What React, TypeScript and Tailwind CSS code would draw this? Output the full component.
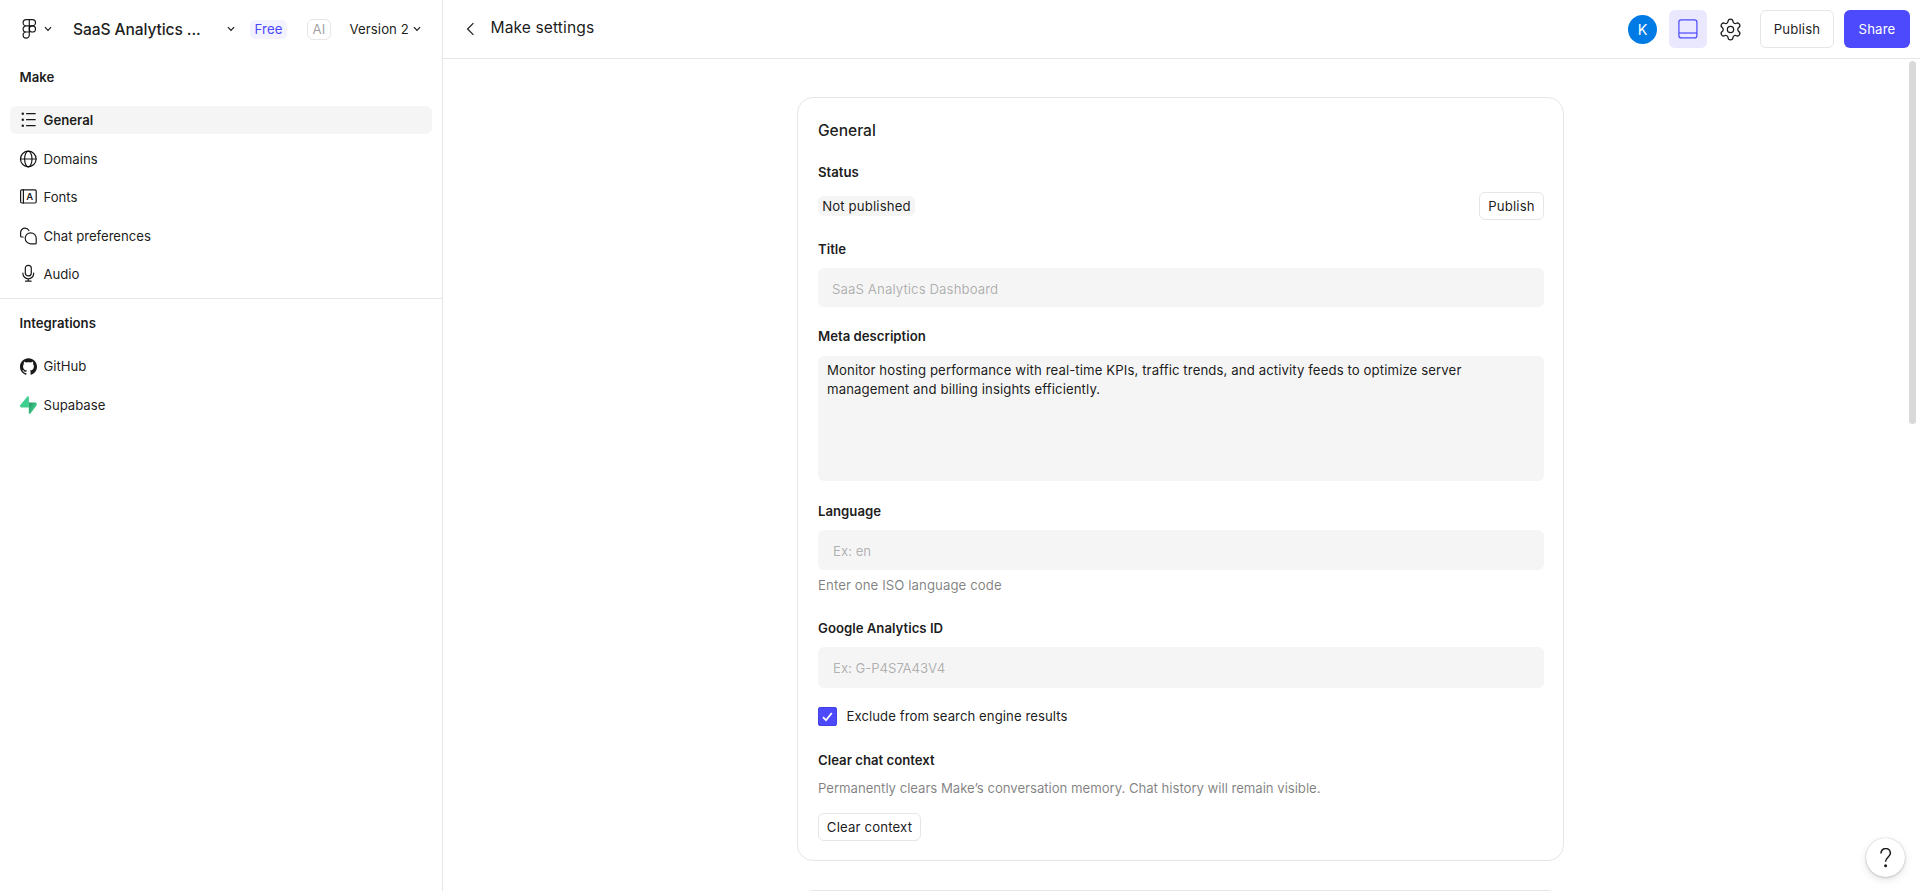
import type { ReactNode } from 'react';
import { Settings } from 'lucide-react';
import { SiGithub } from 'react-icons/si';

interface NavItem {
  icon: ReactNode;
  label: string;
  active?: boolean;
}

function Chevron({ className = '' }: { className?: string }) {
  return (
    <svg className={className} width="8" height="6" viewBox="0 0 8 6" fill="none" stroke="currentColor" strokeWidth="1.2">
      <path d="M0.9 1.2 4 4.3 7.1 1.2" />
    </svg>
  );
}

function FigmaLogo() {
  return (
    <svg width="15" height="21" viewBox="0 0.5 15 21" fill="none" stroke="currentColor" strokeWidth="1.2">
      <path d="M7.3 1.1H4.2a3.1 3.1 0 0 0 0 6.2h3.1zM7.3 1.1h3.1a3.1 3.1 0 0 1 0 6.2H7.3zM7.3 7.3H4.2a3.1 3.1 0 0 0 0 6.2h3.1zM7.3 13.5H4.2a3.1 3.1 0 1 0 3.1 3.1z" />
      <circle cx="10.4" cy="10.4" r="3.1" />
    </svg>
  );
}

function Icon({ children }: { children: ReactNode }) {
  return (
    <svg width="20" height="20" viewBox="0 0 20 20" fill="none" stroke="currentColor" strokeWidth="1.2" strokeLinecap="round" strokeLinejoin="round">
      {children}
    </svg>
  );
}

const makeItems: NavItem[] = [
  {
    label: 'General',
    active: true,
    icon: (
      <Icon>
        <path d="M8.6 3.7h8.6M8.6 9.7h8.6M8.6 15.7h8.6" />
        <g fill="currentColor" stroke="none">
          <circle cx="4.8" cy="3.7" r="1.2" />
          <circle cx="4.8" cy="9.7" r="1.2" />
          <circle cx="4.8" cy="15.7" r="1.2" />
        </g>
      </Icon>
    ),
  },
  {
    label: 'Domains',
    icon: (
      <Icon>
        <circle cx="10.3" cy="10" r="7.8" />
        <ellipse cx="10.3" cy="10" rx="3.7" ry="7.8" />
        <path d="M2.5 10h15.6" />
      </Icon>
    ),
  },
  {
    label: 'Fonts',
    icon: (
      <Icon>
        <rect x="2.6" y="2.8" width="15.6" height="13.2" rx="1.2" />
        <path d="M5.4 2.8V16" />
        <text x="11.8" y="12.6" textAnchor="middle" fontSize="9.5" fontWeight="600" fill="currentColor" stroke="none">
          A
        </text>
      </Icon>
    ),
  },
  {
    label: 'Chat preferences',
    icon: (
      <Icon>
        <path d="M5.2 11H3.5a.9.9 0 0 1-.9-.9V6.6a4.4 4.4 0 0 1 4.4-4.4c1.7 0 3.2 1 3.9 2.4" />
        <path d="M12.7 6.8a5.5 5.5 0 0 1 5.5 5.5v4.6a.9.9 0 0 1-.9.9h-4.6a5.5 5.5 0 0 1 0-11z" />
      </Icon>
    ),
  },
  {
    label: 'Audio',
    icon: (
      <Icon>
        <rect x="7.3" y="1.3" width="6" height="10.6" rx="3" />
        <path d="M4.9 9v.4a5.4 5.4 0 0 0 10.8 0V9M10.3 14.8v2.4M7.5 17.2h5.6" />
      </Icon>
    ),
  },
];

const integrationItems: NavItem[] = [
  { label: 'GitHub', icon: <SiGithub className="ml-0.5 size-[17px]" /> },
  {
    label: 'Supabase',
    icon: (
      <svg width="20" height="20" viewBox="0 0 20 20">
        <defs>
          <linearGradient id="supabase-shade" x1="0" y1="0" x2="0.8" y2="0.6">
            <stop offset="0" stopColor="#249361" />
            <stop offset="1" stopColor="#3ecf8e" />
          </linearGradient>
        </defs>
        <path d="M10.8 7.6v10.3c0 .9 1.1 1.2 1.6.6l6.1-8c.7-.9.1-2.9-1-2.9z" fill="url(#supabase-shade)" />
        <path d="M10.9 2c0-.8-1-1.2-1.5-.5L2.3 10.1c-.7.8-.1 2.5.9 2.5h7.7z" fill="#3ecf8e" />
      </svg>
    ),
  },
];

function NavList({ items }: { items: NavItem[] }) {
  return (
    <nav className="flex flex-col gap-[10.5px] px-2.5 tracking-[-0.04px]">
      {items.map((item) => (
        <div
          key={item.label}
          className={
            item.active
              ? 'flex h-7 items-center rounded-md bg-[#f5f5f5] pl-2 font-semibold tracking-normal'
              : 'flex h-7 items-center rounded-md pl-2'
          }
        >
          <span className="flex w-[25.5px] shrink-0">{item.icon}</span>
          <span className="pt-px text-black/90">{item.label}</span>
        </div>
      ))}
    </nav>
  );
}

function Sidebar() {
  return (
    <aside className="w-[443px] shrink-0 border-r border-[#e6e6e6]">
      <div className="flex h-[58px] items-center">
        <span className="ml-[21.5px] flex">
          <FigmaLogo />
        </span>
        <Chevron className="ml-[7.5px]" />
        <span className="ml-[21px] w-[154px] text-[15.6px] font-medium tracking-[-0.1px]">SaaS Analytics ...</span>
        <Chevron />
        <span className="ml-[15px] flex h-[19px] w-[37px] items-center justify-center rounded-[5px] bg-[#f3f2ff] pt-px text-[#4d49fc]">
          Free
        </span>
        <span className="ml-5 flex h-[21px] w-6 items-center justify-center rounded-md border border-[#e6e6e6] text-black/40">
          AI
        </span>
        <span className="ml-[18.5px] w-[58.5px] pt-px whitespace-nowrap">Version 2</span>
        <Chevron className="ml-[5px]" />
      </div>
      <h2 className="mt-2.5 mb-[19px] ml-[19.5px] font-semibold tracking-normal">Make</h2>
      <NavList items={makeItems} />
      <h2 className="mt-[10px] mb-[19px] border-t border-[#e6e6e6] pt-[15px] pl-[19.5px] font-semibold tracking-normal">
        Integrations
      </h2>
      <NavList items={integrationItems} />
    </aside>
  );
}

function TopBar() {
  return (
    <header className="flex h-[59px] shrink-0 items-center border-b border-[#e6e6e6] pr-2.5 pl-6">
      <svg className="-ml-px" width="8" height="14" viewBox="0 0 8 14" fill="none" stroke="currentColor" strokeWidth="1.2">
        <path d="M7.4 1.2 1.6 7l5.8 5.8" />
      </svg>
      <h1 className="ml-[16.5px] pb-[3px] text-[15.6px] font-normal tracking-[0.1px]">Make settings</h1>
      <div className="ml-auto flex items-center">
        <div className="flex size-[29px] items-center justify-center rounded-full bg-[#007be5] text-[14.4px] text-white">K</div>
        <button className="ml-3 flex size-[38px] items-center justify-center rounded-md bg-[#e9e8ff] text-[#4d49fc]">
          <svg width="20" height="20" viewBox="0 0 20 20" fill="none" stroke="currentColor" strokeWidth="1.2">
            <rect x="0.9" y="0.9" width="18" height="18" rx="2.2" />
            <path d="M1 14h18" />
          </svg>
        </button>
        <Settings className="ml-[11px] size-[25px]" strokeWidth={1.2} />
        <button className="ml-[17px] h-[38px] w-[74px] rounded-md border border-[#e6e6e6] pt-px tracking-[0.15px]">
          Publish
        </button>
        <button className="ml-2.5 h-[38px] w-[66px] rounded-md bg-[#4d49fc] pt-px tracking-[0.15px] text-white">Share</button>
      </div>
    </header>
  );
}

function GeneralCard() {
  return (
    <section className="flex w-[767px] flex-col items-start rounded-2xl border border-[#e6e6e6] pt-[21px] pr-[19px] pb-[19px] pl-5">
      <h2 className="text-[15.6px] leading-6 font-medium tracking-[-0.04px]">General</h2>

      <h3 className="mt-5 font-semibold tracking-normal">Status</h3>
      <div className="mt-2.5 flex h-7 w-full items-center justify-between tracking-[0.15px]">
        <span className="flex h-5 w-[97px] items-center justify-center rounded-md bg-[#f5f5f5] pt-px">Not published</span>
        <button className="h-7 w-[65px] rounded-md border border-[#e6e6e6] pt-px tracking-[0.15px]">Publish</button>
      </div>

      <label className="mt-5 font-semibold tracking-normal">Title</label>
      <input
        className="mt-[9px] h-[39px] w-full rounded-md bg-[#f5f5f5] px-3.5 pt-0.5 placeholder:text-black/30"
        placeholder="SaaS Analytics Dashboard"
      />

      <label className="mt-5 font-semibold tracking-normal">Meta description</label>
      <textarea
        className="mt-2.5 h-[125px] w-full resize-none rounded-md bg-[#f5f5f5] px-[9px] py-[5px] leading-[19px] tracking-[0.1px]"
        defaultValue="Monitor hosting performance with real-time KPIs, traffic trends, and activity feeds to optimize server management and billing insights efficiently."
      />

      <label className="mt-[21px] font-semibold tracking-normal">Language</label>
      <input
        className="mt-[9px] h-10 w-full rounded-md bg-[#f5f5f5] px-[15px] pt-px tracking-normal placeholder:text-black/30"
        placeholder="Ex: en"
      />
      <p className="mt-1.5 text-black/50">Enter one ISO language code</p>

      <label className="mt-6 font-semibold tracking-normal">Google Analytics ID</label>
      <input
        className="mt-[9px] h-[41px] w-full rounded-md bg-[#f5f5f5] px-[15px] tracking-[-0.05px] placeholder:text-black/30"
        placeholder="Ex: G-P4S7A43V4"
      />

      <div className="mt-[19px] flex items-center">
        <span className="flex size-[19px] items-center justify-center rounded-xs border border-[#443fe0] bg-[#4d49fc]">
          <svg width="11" height="10" viewBox="0 0 11 10" fill="none" stroke="white" strokeWidth="1.8">
            <path d="M1 5.2 4 8.2 9.8 1" />
          </svg>
        </span>
        <span className="ml-[9.5px] tracking-[0.05px]">Exclude from search engine results</span>
      </div>

      <h3 className="mt-[25px] font-semibold tracking-normal">Clear chat context</h3>
      <p className="mt-[9px] tracking-[-0.04px] text-black/50">
        Permanently clears Make’s conversation memory. Chat history will remain visible.
      </p>
      <button className="mt-[15px] h-7 w-[103px] rounded-md border border-[#e6e6e6] pt-px tracking-[0.15px]">
        Clear context
      </button>
    </section>
  );
}

export default function App() {
  return (
    <div className="flex h-screen overflow-hidden bg-white font-['Inter',sans-serif] text-[13.2px] leading-[19px] font-normal tracking-[0.08px] text-black/90">
      <Sidebar />
      <div className="flex min-w-0 flex-1 flex-col">
        <TopBar />
        <main className="flex min-h-0 flex-1">
          <div className="flex flex-1 flex-col items-center overflow-hidden pt-[38px] pl-[9px]">
            <GeneralCard />
            <section className="mt-[29px] h-40 w-[767px] shrink-0 rounded-2xl border border-[#e6e6e6]" />
          </div>
          {/* Scrollbar */}
          <div className="w-[11px] pt-0.5 pr-1">
            <div className="h-[363px] rounded-full bg-[#d9d9d9]" />
          </div>
        </main>
      </div>

      <button className="fixed right-[15px] bottom-3.5 flex size-[39px] items-center justify-center rounded-full bg-white shadow-[0_0_1px_rgba(0,0,0,0.3),0_1px_3px_rgba(0,0,0,0.15),0_3px_8px_rgba(0,0,0,0.1)]">
        <svg width="12" height="20" viewBox="0 0 12 20" fill="none" stroke="currentColor" strokeWidth="1.5">
          <path d="M1 5.6V5.2a4.7 4.7 0 0 1 9.4 0c0 3.6-4.8 4.2-4.8 8.6" />
          <circle cx="5.6" cy="17.8" r="1.5" fill="currentColor" stroke="none" />
        </svg>
      </button>
    </div>
  );
}
